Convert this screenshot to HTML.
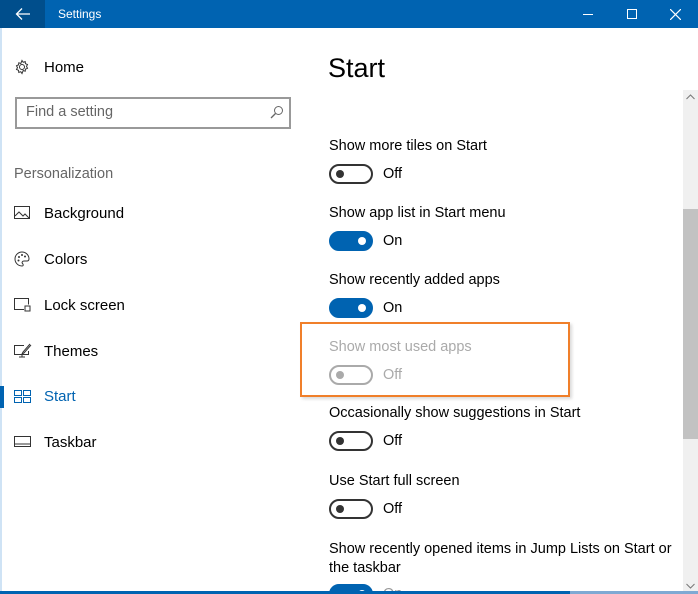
<!DOCTYPE html>
<html style="width:698px;height:594px;overflow:hidden"><head><style>
*{margin:0;padding:0;box-sizing:border-box}
body{width:698px;height:594px;overflow:hidden;background:#fff;font-family:"Liberation Sans",sans-serif;position:relative;color:#000}
.tb{position:absolute;left:0;top:0;width:698px;height:28px;background:#0063b1}
.back{position:absolute;left:0;top:0;width:45px;height:28px;background:#004e8c}
.abs{position:absolute}
.nav{position:absolute;left:44px;font-size:15px;color:#000}
.ic{position:absolute;left:14px}
.lbl{position:absolute;left:329px;font-size:14.5px;color:#000}
.tg{position:absolute;left:329px;width:44px;height:20px;border-radius:10px;border:2px solid #333}
.tg i{position:absolute;top:4px;left:5px;width:8px;height:8px;border-radius:50%;background:#333}
.tg.on{background:#0063b1;border-color:#0063b1}
.tg.on i{left:auto;right:5px;background:#fff}
.st{position:absolute;left:383px;font-size:14.5px}
</style></head><body>
<div class="tb"></div><div class="back"></div>
<svg class="abs" style="left:15px;top:7px" width="16" height="14" viewBox="0 0 16 14"><path d="M15 7H2M7 1.5L1.5 7 7 12.5" stroke="#fff" stroke-width="1.3" fill="none"/></svg>
<div class="abs" style="left:58px;top:7px;color:#fff;font-size:12px">Settings</div>
<div class="abs" style="left:583px;top:14px;width:10px;height:1px;background:#fff"></div>
<div class="abs" style="left:627px;top:9px;width:10px;height:10px;border:1px solid #fff"></div>
<svg class="abs" style="left:670px;top:9px" width="11" height="11"><path d="M0 0L11 11M11 0L0 11" stroke="#fff" stroke-width="1.2"/></svg>
<div class="abs" style="left:0;top:28px;width:2px;height:566px;background:#cfe3f5"></div>

<svg class="ic" style="top:59px" width="16" height="16" viewBox="0 0 16 16"><circle cx="8" cy="8" r="2.5" fill="none" stroke="#333"/><path d="M8 1.5l1.2 1.8 2-.7.3 2.1 2 .8-1 1.9 1 1.9-2 .8-.3 2.1-2-.7L8 14.5l-1.2-1.8-2 .7-.3-2.1-2-.8 1-1.9-1-1.9 2-.8.3-2.1 2 .7z" fill="none" stroke="#333" stroke-width="1"/></svg>
<div class="nav" style="top:59px">Home</div>
<div class="abs" style="left:15px;top:97px;width:276px;height:32px;border:2px solid #999"></div>
<div class="abs" style="left:26px;top:104px;font-size:14.5px;color:#666">Find a setting</div>
<svg class="abs" style="left:270px;top:105px" width="14" height="14"><circle cx="8.5" cy="5.5" r="4" fill="none" stroke="#666"/><path d="M5.5 8.5L1 13" stroke="#666" stroke-width="1.3"/></svg>
<div class="abs" style="left:14px;top:166px;font-size:14.5px;color:#666">Personalization</div>

<svg class="ic" style="top:206px" width="16" height="14"><rect x=".5" y=".5" width="15" height="12" fill="none" stroke="#333"/><path d="M1 10l4-4 4 4 2-2 4 4" fill="none" stroke="#333"/></svg>
<div class="nav" style="top:205px">Background</div>
<svg class="ic" style="top:251px" width="16" height="16"><path d="M8 1a7 7 0 1 0 0 14c1.5 0 1.5-1.5 .5-2.5s0-2.5 1.5-2.5H13c1.5 0 2-1 2-2.5A7 7 0 0 0 8 1z" fill="none" stroke="#333"/><circle cx="5" cy="6" r="1" fill="#333"/><circle cx="8" cy="4" r="1" fill="#333"/><circle cx="11" cy="5.5" r="1" fill="#333"/><circle cx="4.5" cy="9.5" r="1" fill="#333"/></svg>
<div class="nav" style="top:251px">Colors</div>
<svg class="ic" style="top:298px" width="18" height="14"><path d="M10 11.5H.5V.5h14v6" fill="none" stroke="#333"/><rect x="11" y="8" width="5" height="5" fill="none" stroke="#333"/></svg>
<div class="nav" style="top:297px">Lock screen</div>
<svg class="ic" style="top:343px" width="18" height="16"><path d="M10 2.5H.5v9h14V8M5 14h6M8 11.5V14" fill="none" stroke="#333"/><path d="M16 1l-7 8-1 2 2-1 7-8" fill="none" stroke="#333"/></svg>
<div class="nav" style="top:343px">Themes</div>
<div class="abs" style="left:0;top:386px;width:4px;height:22px;background:#0063b1"></div>
<svg class="ic" style="top:390px" width="18" height="13"><rect x=".5" y=".5" width="7" height="5" fill="none" stroke="#0063b1"/><rect x="9.5" y=".5" width="7" height="5" fill="none" stroke="#0063b1"/><rect x=".5" y="7.5" width="7" height="5" fill="none" stroke="#0063b1"/><rect x="9.5" y="7.5" width="7" height="5" fill="none" stroke="#0063b1"/></svg>
<div class="nav" style="top:388px;color:#0063b1">Start</div>
<svg class="ic" style="top:436px" width="18" height="12"><rect x=".5" y=".5" width="16" height="10" fill="none" stroke="#333"/><path d="M1 8h16" stroke="#333"/></svg>
<div class="nav" style="top:434px">Taskbar</div>

<div class="abs" style="left:328px;top:53px;font-size:27px">Start</div>

<div class="lbl" style="top:138px">Show more tiles on Start</div>
<div class="tg" style="top:164px"><i></i></div><div class="st" style="top:166px">Off</div>
<div class="lbl" style="top:205px">Show app list in Start menu</div>
<div class="tg on" style="top:231px"><i></i></div><div class="st" style="top:233px">On</div>
<div class="lbl" style="top:272px">Show recently added apps</div>
<div class="tg on" style="top:298px"><i></i></div><div class="st" style="top:300px">On</div>
<div class="abs" style="left:300px;top:322px;width:270px;height:75px;border:2px solid #f07f2a;box-shadow:2px 2px 3px rgba(0,0,0,.15)"></div>
<div class="lbl" style="top:339px;color:#aaa">Show most used apps</div>
<div class="tg" style="top:365px;border-color:#aaa"><i style="background:#aaa"></i></div><div class="st" style="top:367px;color:#aaa">Off</div>
<div class="lbl" style="top:405px">Occasionally show suggestions in Start</div>
<div class="tg" style="top:431px"><i></i></div><div class="st" style="top:433px">Off</div>
<div class="lbl" style="top:473px">Use Start full screen</div>
<div class="tg" style="top:499px"><i></i></div><div class="st" style="top:501px">Off</div>
<div class="lbl" style="top:540px;line-height:19px">Show recently opened items in Jump Lists on Start or<br>the taskbar</div>
<div class="abs" style="left:0;top:580px;width:683px;height:11px;overflow:hidden">
<div class="tg on" style="top:4px"><i></i></div>
<div class="st" style="top:6px;color:#999">On</div>
</div>

<div class="abs" style="left:683px;top:90px;width:15px;height:501px;background:#f0f0f0"></div>
<div class="abs" style="left:683px;top:209px;width:15px;height:230px;background:#c2c2c2"></div>
<svg class="abs" style="left:686px;top:94px" width="9" height="6"><path d="M.5 5L4.5 1 8.5 5" fill="none" stroke="#777"/></svg>
<svg class="abs" style="left:686px;top:583px" width="9" height="6"><path d="M.5 1L4.5 5 8.5 1" fill="none" stroke="#777"/></svg>
<div class="abs" style="left:0;top:591px;width:570px;height:3px;background:#0063b1;z-index:5"></div>
<div class="abs" style="left:570px;top:591px;width:128px;height:3px;background:#7fa9d3;z-index:5"></div>
</body></html>
